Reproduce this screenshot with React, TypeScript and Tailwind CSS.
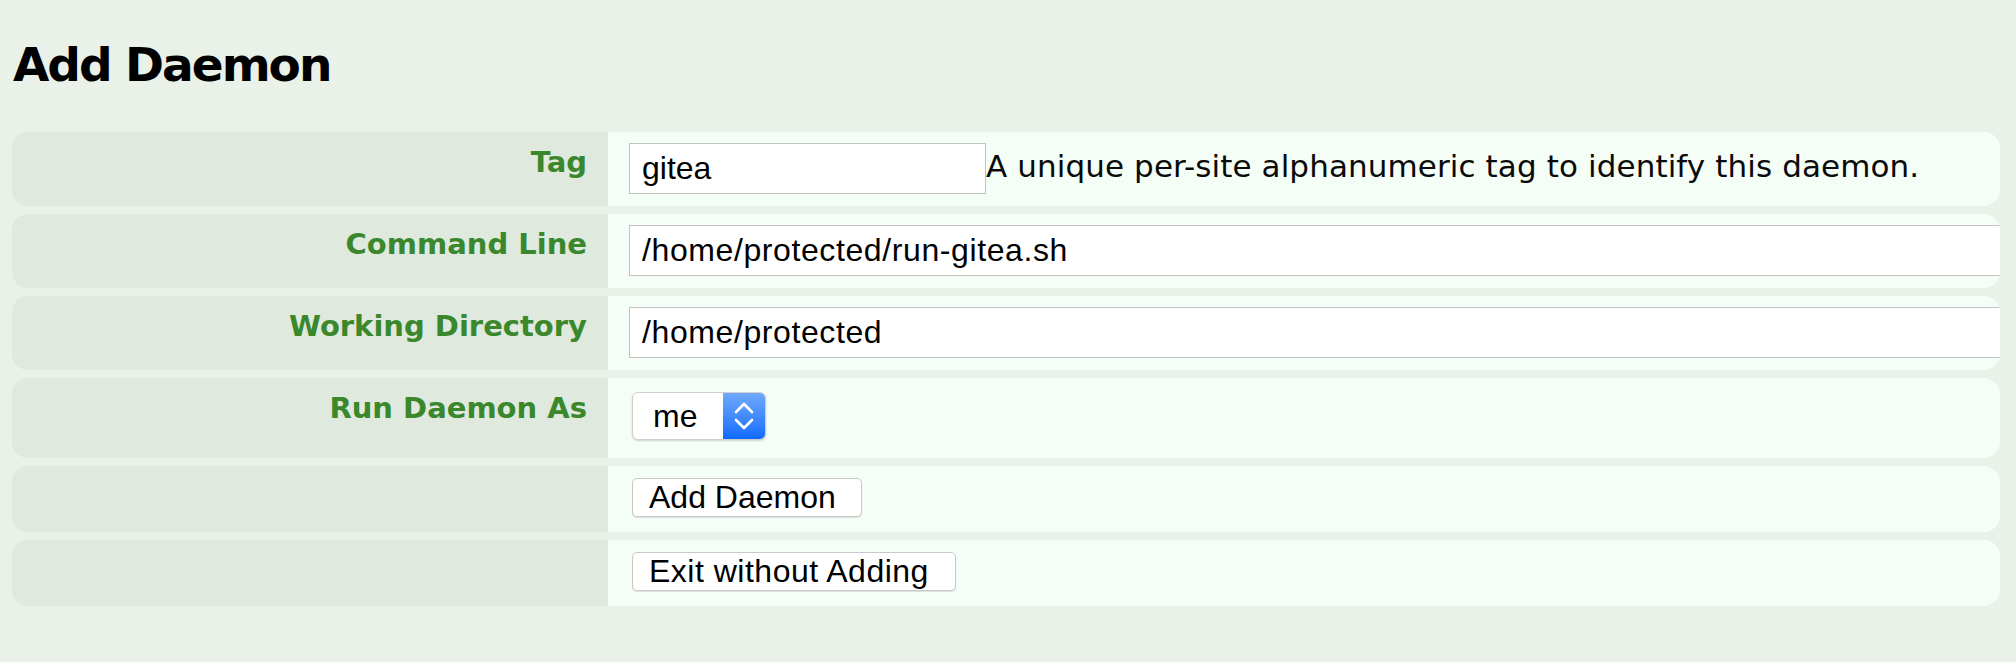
import React from "react";

const labelFont = { fontFamily: '"DejaVu Sans", Verdana, sans-serif' };

function Label({ children }: { children?: React.ReactNode }) {
  return (
    <div className="bg-[#dfe9dd] rounded-l-[16px] pr-[21px] pt-[13px] text-right">
      <span className="text-[29px] leading-[34px] font-bold text-[#3a872c] font-['DejaVu_Sans',sans-serif]">
        {children}
      </span>
    </div>
  );
}

function Value({ children, cls }: { children?: React.ReactNode; cls: string }) {
  return (
    <div className={"bg-[#f5fef6] rounded-r-[16px] overflow-hidden pl-[21px] " + cls}>{children}</div>
  );
}

function TextInput({ value, wide }: { value: string; wide?: boolean }) {
  return (
    <input
      readOnly
      value={value}
      className={
        "h-[51px] border border-[#c2c2c2] bg-white pl-[12px] text-[32px] text-black font-['Liberation_Sans',Arial,sans-serif] outline-none shrink-0 " +
        (wide ? "w-[1500px] tracking-[0.6px]" : "w-[357px]")
      }
    />
  );
}

function Btn({ children, w }: { children: React.ReactNode; w: string }) {
  return (
    <button
      className={
        "h-[39px] bg-white border border-[#c8c8c8] rounded-[5px] shadow-[0_1px_1px_rgba(0,0,0,0.12)] pl-[16px] text-left text-[32px] leading-[35px] text-black font-['Liberation_Sans',Arial,sans-serif] " +
        w
      }
    >
      {children}
    </button>
  );
}

export default function App() {
  return (
    <div className="min-h-[662px] w-full bg-[#e9f1e9] pl-[12px] pr-[16px] pt-[41px]" style={labelFont}>
      <h1 className="text-[47px] leading-[47px] font-bold tracking-[-2px] text-black font-['DejaVu_Sans',sans-serif] pl-[1px]">
        Add Daemon
      </h1>
      <div className="mt-[44px] grid grid-cols-[596px_1fr] gap-y-[8px]">
        <Label>Tag</Label>
        <Value cls="pt-[11px] pb-[12px] flex items-start">
          <TextInput value="gitea" />
          <span className="mt-[5px] text-[31px] leading-[36px] tracking-[0.1px] text-[#0a0a0a] whitespace-nowrap font-['DejaVu_Sans',sans-serif]">
            A unique per-site alphanumeric tag to identify this daemon.
          </span>
        </Value>

        <Label>Command Line</Label>
        <Value cls="pt-[11px] pb-[12px] flex">
          <TextInput value="/home/protected/run-gitea.sh" wide />
        </Value>

        <Label>Working Directory</Label>
        <Value cls="pt-[11px] pb-[12px] flex">
          <TextInput value="/home/protected" wide />
        </Value>

        <Label>Run Daemon As</Label>
        <Value cls="pt-[14px] pb-[18px] flex">
          <div className="ml-[3px] h-[48px] w-[134px] flex rounded-[6px] bg-white border border-[#cfcfcf] shadow-[0_1px_2px_rgba(0,0,0,0.18)] overflow-hidden">
            <div className="flex-1 flex items-center pl-[20px] text-[32px] text-black font-['Liberation_Sans',Arial,sans-serif]">
              me
            </div>
            <div className="w-[42px] h-full bg-gradient-to-b from-[#6fa9fc] to-[#0a6bfe] flex items-center justify-center">
              <svg width="42" height="48" viewBox="0 0 42 48" fill="none">
                <path d="M13 20 L21 12 L29 20" stroke="white" strokeWidth="2.6" strokeLinecap="round" strokeLinejoin="round" />
                <path d="M13 28 L21 36 L29 28" stroke="white" strokeWidth="2.6" strokeLinecap="round" strokeLinejoin="round" />
              </svg>
            </div>
          </div>
        </Value>

        <Label />
        <Value cls="pt-[12px] pb-[15px] flex">
          <div className="ml-[3px] flex">
            <Btn w="w-[230px]">Add Daemon</Btn>
          </div>
        </Value>

        <Label />
        <Value cls="pt-[12px] pb-[15px] flex">
          <div className="ml-[3px] flex">
            <Btn w="w-[324px] tracking-[0.5px]">Exit without Adding</Btn>
          </div>
        </Value>
      </div>
    </div>
  );
}
